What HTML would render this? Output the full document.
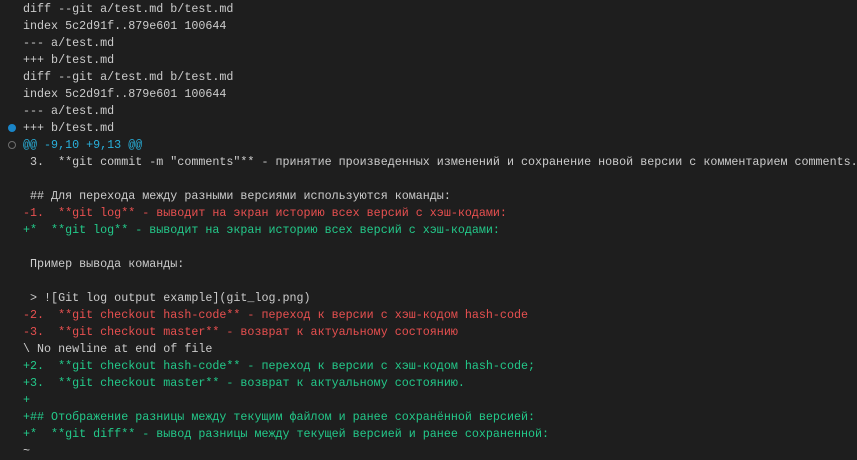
<!DOCTYPE html>
<html><head><meta charset="utf-8"><style>
html,body{margin:0;padding:0;background:#1e1e1e;width:857px;height:459px;overflow:hidden}
.t{position:absolute;left:23px;top:1px;font-family:"Liberation Mono","DejaVu Sans Mono",monospace;font-size:11.7px;line-height:17px;color:#cccccc;white-space:pre}
.r{color:#e85050}.g{color:#23c98a}.c{color:#29b0db}
.d1{position:absolute;left:8px;top:124px;width:8px;height:8px;border-radius:50%;background:#1a85c8}
.d2{position:absolute;left:8px;top:141px;width:6px;height:6px;border-radius:50%;border:1px solid #6e6e6e}
</style></head><body>
<div class="d1"></div><div class="d2"></div>
<div class="t">diff --git a/test.md b/test.md
index 5c2d91f..879e601 100644
--- a/test.md
+++ b/test.md
diff --git a/test.md b/test.md
index 5c2d91f..879e601 100644
--- a/test.md
+++ b/test.md
<span class="c">@@ -9,10 +9,13 @@</span>
 3.  **git commit -m "comments"** - принятие произведенных изменений и сохранение новой версии с комментарием comments.
 
 ## Для перехода между разными версиями используются команды:
<span class="r">-1.  **git log** - выводит на экран историю всех версий с хэш-кодами:</span>
<span class="g">+*  **git log** - выводит на экран историю всех версий с хэш-кодами:</span>
 
 Пример вывода команды:
 
 > ![Git log output example](git_log.png)
<span class="r">-2.  **git checkout hash-code** - переход к версии с хэш-кодом hash-code</span>
<span class="r">-3.  **git checkout master** - возврат к актуальному состоянию</span>
\ No newline at end of file
<span class="g">+2.  **git checkout hash-code** - переход к версии с хэш-кодом hash-code;</span>
<span class="g">+3.  **git checkout master** - возврат к актуальному состоянию.</span>
<span class="g">+</span>
<span class="g">+## Отображение разницы между текущим файлом и ранее сохранённой версией:</span>
<span class="g">+*  **git diff** - вывод разницы между текущей версией и ранее сохраненной:</span>
~</div>
</body></html>
